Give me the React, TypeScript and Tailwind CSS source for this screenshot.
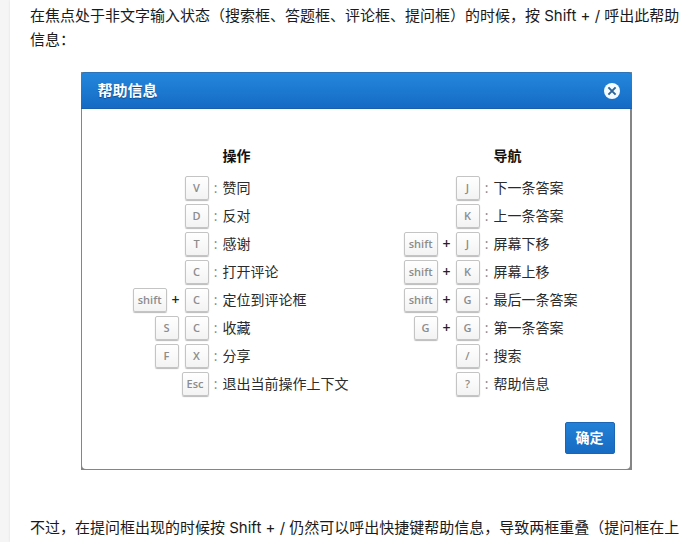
import { Fragment } from "react";

type Shortcut = { keys: string[]; plus?: boolean; label: string };

const actions: Shortcut[] = [
  { keys: ["V"], label: "赞同" },
  { keys: ["D"], label: "反对" },
  { keys: ["T"], label: "感谢" },
  { keys: ["C"], label: "打开评论" },
  { keys: ["shift", "C"], plus: true, label: "定位到评论框" },
  { keys: ["S", "C"], label: "收藏" },
  { keys: ["F", "X"], label: "分享" },
  { keys: ["Esc"], label: "退出当前操作上下文" },
];

const navigation: Shortcut[] = [
  { keys: ["J"], label: "下一条答案" },
  { keys: ["K"], label: "上一条答案" },
  { keys: ["shift", "J"], plus: true, label: "屏幕下移" },
  { keys: ["shift", "K"], plus: true, label: "屏幕上移" },
  { keys: ["shift", "G"], plus: true, label: "最后一条答案" },
  { keys: ["G", "G"], plus: true, label: "第一条答案" },
  { keys: ["/"], label: "搜索" },
  { keys: ["?"], label: "帮助信息" },
];

function Key({ children }: { children: string }) {
  return (
    <kbd className="flex h-6 min-w-6 items-center justify-center rounded-xs border border-[#c4c4c4] bg-linear-to-b from-white to-[#f3f3f3] px-1 pb-0.5 font-['Open_Sans','Noto_Sans',sans-serif] text-[11px] leading-none font-semibold text-[#8c8c8c] shadow-[0_1px_1px_#bbb]">
      {children}
    </kbd>
  );
}

function ShortcutTable({ title, items }: { title: string; items: Shortcut[] }) {
  return (
    <table className="w-full table-fixed border-collapse text-sm leading-7">
      <thead>
        <tr className="h-8 align-top">
          <td className="w-31 p-0" />
          <td className="w-3.5 p-0" />
          <th className="p-0 text-left font-bold text-[#111]">{title}</th>
        </tr>
      </thead>
      <tbody>
        {items.map((item) => (
          <tr key={item.label} className="h-7">
            <td className="p-0">
              <div className="flex items-center justify-end gap-1.5">
                {item.keys.map((key, i) => (
                  <Fragment key={i}>
                    {i > 0 && item.plus && (
                      <span className="-mx-1 w-3.5 text-center leading-none font-semibold text-[#222]">+</span>
                    )}
                    <Key>{key}</Key>
                  </Fragment>
                ))}
              </div>
            </td>
            <td className="p-0 text-center leading-none text-[#888]">:</td>
            <td className="p-0 leading-none whitespace-nowrap text-[#2b2b2b]">{item.label}</td>
          </tr>
        ))}
      </tbody>
    </table>
  );
}

function HelpDialog() {
  return (
    <section
      aria-labelledby="help-title"
      className="mx-auto max-w-[551px] bg-[#858585] font-['Open_Sans','Noto_Sans_CJK_SC',sans-serif]"
    >
      <header className="flex h-[37px] items-center justify-between rounded-t-sm border-t border-b border-t-[#2b74b8] border-b-[#1a5fae] bg-linear-to-b from-[#2487dc] to-[#166bc4] pr-3 pl-[17px]">
        <h2 id="help-title" className="text-[15px] leading-none font-bold text-white text-shadow-[0_1px_1px_#0d4a8c]">
          帮助信息
        </h2>
        <button type="button" aria-label="关闭">
          <svg width="16" height="16" viewBox="0 0 16 16" fill="none">
            <circle cx="8" cy="8" r="8" fill="#f4fcff" />
            <path d="M4.4 4.4l7.2 7.2M11.6 4.4l-7.2 7.2" stroke="#2f6496" strokeWidth="2" />
          </svg>
        </button>
      </header>
      <div className="pr-0.5 pb-px pl-px">
        <div className="rounded-b-sm bg-white">
          <div className="grid grid-cols-2 px-[3px] pt-[33px]">
            <ShortcutTable title="操作" items={actions} />
            <ShortcutTable title="导航" items={navigation} />
          </div>
          <div className="flex justify-end px-[15px] pt-6 pb-[15px]">
            <button
              type="button"
              className="h-8 rounded-xs border border-[#1b66b4] bg-linear-to-b from-[#2281d6] to-[#176bc2] px-2.5 text-sm leading-none font-bold text-white"
            >
              确定
            </button>
          </div>
        </div>
      </div>
    </section>
  );
}

export default function App() {
  return (
    <div lang="zh-CN" className="min-h-screen bg-[#f5f5f5] pl-2.5">
      <main className="min-h-screen bg-white pt-1 pr-4 pl-5 font-['Inter','Noto_Sans_CJK_SC',sans-serif] text-[15px] leading-6 text-[#1a1a1a] shadow-[0_0_2px_#ddd]">
        <p className="mb-5">
          在焦点处于非文字输入状态（搜索框、答题框、评论框、提问框）的时候，按 Shift + / 呼出此帮助信息：
        </p>
        <HelpDialog />
        <p className="mt-[46px]">
          不过，在提问框出现的时候按 Shift + / 仍然可以呼出快捷键帮助信息，导致两框重叠（提问框在上
        </p>
      </main>
    </div>
  );
}
